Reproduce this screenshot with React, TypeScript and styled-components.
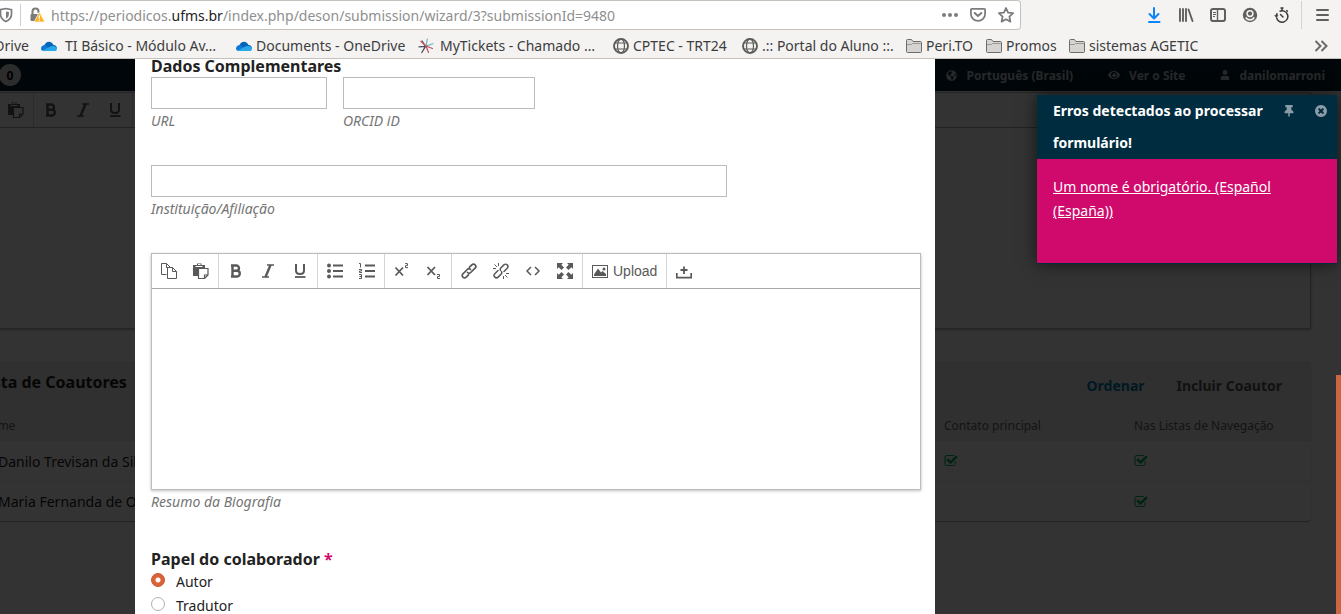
import React from 'react';
import styled, { createGlobalStyle, css } from 'styled-components';
import { FaUser, FaEye, FaGlobeAmericas, FaThumbtack } from 'react-icons/fa';

const GlobalStyle = createGlobalStyle`
  *, *::before, *::after { box-sizing: border-box; }
  body { margin: 0; background: #fff; font-family: 'Noto Sans', 'Open Sans', sans-serif; }
  button, input, textarea { font: inherit; margin: 0; }
  button { border: 0; padding: 0; background: none; color: inherit; }
  a { color: inherit; text-decoration: none; }
`;

/* ---------- icons ---------- */

type IconProps = { size?: number; box?: number; children: React.ReactNode };
const Icon = ({ size = 16, box = 16, children }: IconProps) => (
  <svg width={size} height={size} viewBox={`0 0 ${box} ${box}`} fill="none" aria-hidden="true">
    {children}
  </svg>
);

const CheckSquare = () => (
  <Icon size={14} box={1792}>
    <path fill="currentColor" d="M1472 930v318q0 119-84.5 203.5t-203.5 84.5h-832q-119 0-203.5-84.5t-84.5-203.5v-832q0-119 84.5-203.5t203.5-84.5h832q63 0 117 25 15 7 18 23 3 17-9 29l-49 49q-10 10-23 10-3 0-9-2-23-6-45-6h-832q-66 0-113 47t-47 113v832q0 66 47 113t113 47h832q66 0 113-47t47-113v-254q0-13 9-22l64-64q10-10 23-10 6 0 12 3 20 8 20 29zm231-489l-814 814q-24 24-57 24t-57-24l-430-430q-24-24-24-57t24-57l110-110q24-24 57-24t57 24l263 263 647-647q24-24 57-24t57 24l110 110q24 24 24 57t-24 57z" />
  </Icon>
);

const TimesCircle = () => (
  <Icon size={14} box={1792}>
    <path fill="currentColor" d="M1277 1122q0-26-19-45l-181-181 181-181q19-19 19-45 0-27-19-46l-90-90q-19-19-46-19-26 0-45 19l-181 181-181-181q-19-19-45-19-27 0-46 19l-90 90q-19 19-19 46 0 26 19 45l181 181-181 181q-19 19-19 45 0 27 19 46l90 90q19 19 46 19 26 0 45-19l181-181 181 181q19 19 45 19 27 0 46-19l90-90q19-19 19-46zm387-226q0 209-103 385.5t-279.5 279.5-385.5 103-385.5-103-279.5-279.5-103-385.5 103-385.5 279.5-279.5 385.5-103 385.5 103 279.5 279.5 103 385.5z" />
  </Icon>
);

const ShieldIcon = () => (
  <Icon>
    <path d="M2.5 2.6 8 1.5l5.500 1.100v4.400c0 3.600-2.200 6-5.500 7.600-3.300-1.600-5.500-4-5.500-7.600z" stroke="#7c7c7c" strokeWidth="1.700" />
    <path d="M8 4.500v7.200c1.900-1.100 2.900-2.600 2.900-4.700V5z" fill="#7c7c7c" />
  </Icon>
);
const LockIcon = () => (
  <Icon>
    <path d="M3.500 8V4.500a3 3 0 0 1 6 0V6" stroke="#7a7a7a" strokeWidth="2" />
    <rect x="1.500" y="7" width="10" height="7" rx="1" fill="#7a7a7a" />
    <path d="M10.500 5 15.800 15H5z" fill="#ffb31a" stroke="#f5f5f5" strokeWidth=".8" strokeLinejoin="round" />
    <path d="M10.400 8.500v3M10.400 12.600v1.200" stroke="#fff" strokeWidth="1.300" />
  </Icon>
);
const DotsIcon = () => (
  <Icon><g fill="#7c7c7c"><circle cx="2" cy="8" r="2" /><circle cx="8" cy="8" r="2" /><circle cx="14" cy="8" r="2" /></g></Icon>
);
const PocketIcon = () => (
  <Icon>
    <path d="M1.800 1.800h12.400a.9.9 0 0 1 .9.900V7a7.100 6.800 0 0 1-14.200 0V2.700a.9.9 0 0 1 .9-.9z" stroke="#7c7c7c" strokeWidth="1.800" />
    <path d="M4.700 6 8 9.100 11.300 6" stroke="#7c7c7c" strokeWidth="2" strokeLinecap="round" strokeLinejoin="round" />
  </Icon>
);
const StarIcon = () => (
  <Icon>
    <path d="m8 1 2.100 4.600 5 .6-3.700 3.400 1 5L8 12.200l-4.400 2.400 1-5L.9 6.200l5-.6z" stroke="#7c7c7c" strokeWidth="1.800" strokeLinejoin="round" />
  </Icon>
);
const DownloadIcon = () => (
  <Icon>
    <path d="M8 1v10M3.500 7 8 11.500 12.500 7" stroke="#0a84ff" strokeWidth="2" strokeLinecap="round" strokeLinejoin="round" />
    <path d="M3 15h10.500" stroke="#0a84ff" strokeWidth="2" strokeLinecap="round" />
  </Icon>
);
const LibraryIcon = () => (
  <Icon><path d="M2 2v12M5 2v12M8 2v12M10.500 2.500l4 11.500" stroke="#5f5f60" strokeWidth="1.900" strokeLinecap="round" /></Icon>
);
const SidebarIcon = () => (
  <Icon>
    <rect x="1" y="2" width="14" height="12" rx="2" stroke="#5f5f60" strokeWidth="2" />
    <path d="M7.500 2v12" stroke="#5f5f60" strokeWidth="1.400" />
    <path d="M3 5.500h3M3 7.500h3M3 9.500h2" stroke="#5f5f60" strokeWidth="1" />
  </Icon>
);
const AccountIcon = () => (
  <Icon>
    <circle cx="8" cy="8" r="7.200" fill="#5f5f60" />
    <circle cx="8" cy="6.600" r="2.900" stroke="#f4f3f2" strokeWidth="1.500" />
    <path d="M3.800 10.400c1 2 2.400 2.500 4.200 2.500s3.200-.5 4.200-2.500" stroke="#f4f3f2" strokeWidth="1.600" />
  </Icon>
);
const TimerIcon = () => (
  <Icon>
    <path d="M5.500 4.400a5.700 5.700 0 1 1-3 6" stroke="#3a3a3c" strokeWidth="1.500" />
    <path d="M2.200 9.200a5.700 5.700 0 0 1 1.200-3M6.500 1h3M8 1v2.500M12.300 3.200l1.500 1.400" stroke="#3a3a3c" strokeWidth="1.500" />
    <path d="M.2 8.200 2.300 10.800 4.600 8.200z" fill="#3a3a3c" />
    <path d="m6.500 7.500 2.500 2.500" stroke="#3a3a3c" strokeWidth="1.500" strokeLinecap="round" />
  </Icon>
);
const MenuIcon = () => (
  <Icon><path d="M3 3h11M3 8h11M3 13h11" stroke="#5f5f60" strokeWidth="2" strokeLinecap="round" /></Icon>
);
const CloudIcon = () => (
  <Icon>
    <path d="M3 8.500C4 4 9.500 1.500 12.500 7c2.500 0 3.500 2 3.400 3.500L8 12z" fill="#0364b8" />
    <path d="M0 10.500C0 8 2 6.800 4.500 7L12 12.800H2.500C1 12.800 0 12 0 10.500z" fill="#0f78d4" />
    <path d="M2 12.300 9.500 8.500c2.500-1 6-.5 6.500 2.200 0 1.500-1 2.300-2.500 2.300H3.500z" fill="#28a8ea" />
  </Icon>
);
const TicketIcon = () => (
  <Icon>
    <path d="M7.500 8.300 1 8.800M7.500 8.300 3.800 14.500M7.500 8.300 4 3" stroke="#474b58" strokeWidth="1.300" strokeLinecap="round" />
    <path d="M8 8 9.300 1.200M8 8l7-2.300" stroke="#6fb3bf" strokeWidth="1.200" strokeLinecap="round" />
    <path d="m8 8 6.500 2.500M8 8l2.500 6.500M8 8 3 3.500" stroke="#c4505c" strokeWidth="1.200" strokeLinecap="round" />
  </Icon>
);
const GlobeIcon = () => (
  <Icon>
    <circle cx="8" cy="8" r="7" stroke="#5c5c58" strokeWidth="1.900" />
    <ellipse cx="8" cy="8" rx="3.500" ry="7" stroke="#5c5c58" strokeWidth="1.200" />
    <path d="M2 5h12M2 11h12" stroke="#5c5c58" strokeWidth="1.200" />
  </Icon>
);
const FolderIcon = () => (
  <Icon>
    <path d="M.5 13.500v-11a1 1 0 0 1 1-1h4l1.500 2h7.500a1 1 0 0 1 1 1v9a1 1 0 0 1-1 1h-13a1 1 0 0 1-1-1z" fill="#d5d4d1" stroke="#6d6d68" />
    <path d="M1 6.500h4.500l1-1H15" stroke="#8b8b86" strokeWidth=".8" />
  </Icon>
);
const ChevronsIcon = () => (
  <Icon><path d="m2.500 3 5 5-5 5M8.500 3l5 5-5 5" stroke="#6a6a6a" strokeWidth="2" /></Icon>
);

/* editor toolbar icons */
const CopyIcon = () => (
  <Icon>
    <path d="M5.500 11.500h-5V.5h5l4 4M5.500.5v4h6l4 4v7h-9v-11M11.500 4.500v4h4M9.500 4.500h-4" stroke="#595959" />
  </Icon>
);
const PasteIcon = () => (
  <Icon>
    <path d="M0 2h4V.5h4.500V2H12v3H6v8H0z" fill="#595959" />
    <path d="M2.500 3.500h7M5 1.500h2.500" stroke="#fff" />
    <path d="M5.500 5.500h9.500v6.500l-3.500 3.500h-6zM15 12h-3.500v3.500" stroke="#595959" fill="#fff" strokeWidth="1.200" />
  </Icon>
);
const BoldIcon = () => (
  <Icon><path d="M4.500 2.500V13.500h4.200a2.800 2.800 0 0 0 .4-5.700H5h3.300a2.600 2.600 0 0 0 0-5.300H4.500M3 2.500h2M3 13.500h2" stroke="#595959" strokeWidth="2.400" /></Icon>
);
const ItalicIcon = () => (
  <Icon><path d="M7 2h7M2 14h7" stroke="#595959" strokeWidth="1.400" /><path d="M10.500 2 5.500 14" stroke="#595959" strokeWidth="2.400" /></Icon>
);
const UnderlineIcon = () => (
  <Icon><path d="M4 1v6.500c0 2.200 1.500 3.500 4 3.500s4-1.300 4-3.500V1" stroke="#595959" strokeWidth="2" /><path d="M3 14h10.500" stroke="#595959" strokeWidth="1.800" /></Icon>
);
const BulletIcon = () => (
  <Icon>
    <g fill="#595959"><circle cx="2" cy="2.500" r="2" /><circle cx="2" cy="8" r="2" /><circle cx="2" cy="13.500" r="2" /></g>
    <path d="M6 2.500h10M6 8h10M6 13.500h10" stroke="#595959" strokeWidth="1.800" />
  </Icon>
);
const NumberIcon = () => (
  <Icon>
    <path d="M6 2.500h10M6 8h10M6 13.500h10" stroke="#595959" strokeWidth="1.800" />
    <path d="M0 .5h1.500v4M0 6.500h2.500v1.500H.5v1.500H3M0 11.500h2.500v4H0M.5 13.500h2" stroke="#595959" />
  </Icon>
);
const SuperIcon = () => (
  <Icon><path d="m1.500 4.500 7.500 8M9 4.500l-7.500 8" stroke="#595959" strokeWidth="1.800" /><path d="M11 .6h2.500v2h-2v2H14" stroke="#595959" /></Icon>
);
const SubIcon = () => (
  <Icon><path d="m1.500 4 7.500 8M9 4l-7.500 8" stroke="#595959" strokeWidth="1.800" /><path d="M11 11.500h2.500v2h-2v2H14" stroke="#595959" /></Icon>
);
const LinkIcon = () => (
  <Icon>
    <path d="M6.500 9.500a2.300 2.300 0 0 0 3.200 0l4.400-4.300a2.300 2.300 0 0 0-3.300-3.300L8.500 4.200M9.500 6.500a2.300 2.300 0 0 0-3.200 0l-4.400 4.300a2.300 2.300 0 0 0 3.300 3.300l2.300-2.300" stroke="#595959" strokeWidth="1.700" strokeLinecap="round" />
  </Icon>
);
const UnlinkIcon = () => (
  <Icon>
    <path d="M11 8.500 14.200 5.200a2.300 2.300 0 0 0-3.300-3.300L7.500 5.300a2 2 0 0 0 0 2M5 7.500l-3.200 3.300a2.300 2.300 0 0 0 3.300 3.300l3.400-3.400a2 2 0 0 0 0-2" stroke="#595959" strokeWidth="1.500" strokeLinecap="round" />
    <path d="M5.500 0v3M1.500 1.500 4 4M0 5.500h3M10.500 13v3M12 12l2.500 2.500M13 10.500h3" stroke="#595959" />
  </Icon>
);
const CodeIcon = () => (
  <Icon><path d="M6 4 2 8l4 4M10 4l4 4-4 4" stroke="#595959" strokeWidth="1.500" /></Icon>
);
const FullscreenIcon = () => (
  <Icon>
    <path d="M0 0h6L4.300 1.700 7 4.500 4.500 7 1.700 4.300 0 6zM16 0v6l-1.700-1.700L11.500 7 9 4.500l2.700-2.800L10 0zM0 16v-6l1.700 1.700L4.500 9 7 11.500l-2.700 2.800L6 16zM16 16h-6l1.700-1.700L9 11.500 11.500 9l2.800 2.700L16 10z" fill="#595959" />
  </Icon>
);
const ImageIcon = () => (
  <Icon>
    <rect x=".5" y="2.500" width="15" height="12" stroke="#595959" />
    <path d="M2 13v-1.500L6 5.500l3 4 1.500-1.500L14 11v2z" fill="#595959" /><circle cx="12" cy="6" r="1.500" fill="#595959" />
  </Icon>
);
const UploadIcon = () => (
  <Icon>
    <path d="M.8 10v4.700h14.400V10" stroke="#595959" strokeWidth="1.700" />
    <path d="M8 3.500V11M4.500 7h7" stroke="#595959" strokeWidth="1.800" />
  </Icon>
);

/* ---------- browser chrome ---------- */

const Screen = styled.div`
  display: flex;
  flex-direction: column;
  height: 100vh;
  overflow: hidden;
`;
const Chrome = styled.header`
  flex: none;
  background: #f4f3f2;
  border-bottom: 1px solid #c5c1bd;
  color: #3d3d3d;
  font-size: 14px;
`;
const AddressRow = styled.div`
  display: flex;
  height: 30px;
`;
const AddressBar = styled.div`
  flex: 1;
  display: flex;
  align-items: center;
  background: #fff;
  border: 1px solid #c5c1bd;
  border-left: 0;
  border-radius: 0 4px 4px 0;
`;
const IconButton = styled.button`
  display: grid;
  place-items: center;
  width: 28px;
  height: 28px;
`;
const SiteInfo = styled.div`
  display: flex;
  align-items: center;
  gap: 8px;
  height: 22px;
  margin-left: -2px;
`;
const SiteInfoRule = styled.span`
  width: 1px;
  height: 22px;
  margin-left: -2px;
  background: #cfcfcf;
`;
const Url = styled.span`
  flex: 1;
  padding-left: 6px;
  color: #8f8f8f;
  white-space: nowrap;
  b { color: #222; font-weight: 400; }
`;
const BrowserTools = styled.div`
  display: flex;
  align-items: center;
  padding-left: 117px;
`;
const ToolButton = styled(IconButton)`
  width: 32px;
`;
const MenuSlot = styled.div`
  display: flex;
  margin-left: 3px;
  padding: 0 3px 0 4px;
  border-left: 1px solid #d5d3d1;
`;
const Bookmarks = styled.nav`
  display: flex;
  align-items: center;
  height: 28px;
  padding-top: 3px;
`;
const Bookmark = styled.a<{ $width: number; $gap?: number; $clip?: boolean }>`
  flex: none;
  display: flex;
  align-items: center;
  gap: ${(p) => p.$gap ?? 4}px;
  width: ${(p) => p.$width}px;
  line-height: 24px;
  white-space: nowrap;
  svg { flex: none; }
  ${(p) => p.$clip && css`
    justify-content: flex-end;
    overflow: hidden;
    padding-right: 12px;
  `}
`;
const Overflow = styled.button`
  margin-left: auto;
  padding-right: 12px;
  display: flex;
`;

/* ---------- page behind the dialog ---------- */

const Viewport = styled.div`
  position: relative;
  flex: 1;
  overflow: hidden;
`;
const NavBar = styled.nav`
  display: flex;
  align-items: center;
  height: 32px;
  padding: 0 16px 0 0;
  background: #00202f;
  color: rgba(255, 255, 255, 0.75);
  font-size: 12px;
  font-weight: 700;
`;
const TaskCount = styled.button`
  width: 22px;
  height: 22px;
  margin-left: -1px;
  margin-right: auto;
  border-radius: 11px;
  background: #ddd;
  color: #000;
`;
const NavLink = styled.a`
  display: flex;
  align-items: center;
  gap: 9px;
  margin-left: 35px;
`;
const Content = styled.main`
  margin: 1px 30px 0 -34px;
`;
const EditorFrame = styled.div<{ $body: number }>`
  border: 1px solid #bbb;
  box-shadow: 0 1px 3px rgba(0, 0, 0, 0.25);
  textarea {
    display: block;
    width: 100%;
    height: ${(p) => p.$body}px;
    border: 0;
    padding: 8px;
    resize: none;
    background: #fff;
    outline: 0;
  }
`;
const ToolbarRow = styled.div`
  display: flex;
  height: 35px;
  border-bottom: 1px solid #aaa;
  background: #fff;
`;
const ToolGroup = styled.div`
  display: flex;
  padding: 0 1px;
  border-right: 1px solid #d5d5d5;
  &:last-child { border-right: 0; }
`;
const EditorButton = styled.button`
  display: flex;
  align-items: center;
  justify-content: center;
  gap: 5px;
  min-width: 32px;
  padding: 0 8px;
  color: #595959;
  font: 14px 'Liberation Sans', Arial, sans-serif;
`;
const Panel = styled.section`
  margin-top: 32px;
  border-radius: 4px;
  background: #fff;
  box-shadow: 0 1px 1px rgba(0, 0, 0, 0.35);
`;
const PanelHead = styled.div`
  display: flex;
  justify-content: space-between;
  height: 48px;
  padding: 0 29px 0 13px;
  background: #f0f0f0;
  line-height: 42px;
  h2 { margin: 0; font-size: 16px; color: #222; }
`;
const PanelActions = styled.div`
  display: flex;
  gap: 32px;
  line-height: 50px;
  font-size: 14px;
  font-weight: 700;
`;
const PanelAction = styled.button<{ $primary?: boolean }>`
  color: ${(p) => (p.$primary ? '#007ab2' : '#555')};
`;
const Table = styled.table`
  width: 100%;
  table-layout: fixed;
  border-collapse: separate;
  border-spacing: 0;
  text-align: left;
  th {
    height: 32px;
    padding: 0 0 0 15px;
    background: #f0f0f0;
    color: #666;
    font-size: 12px;
    font-weight: 400;
  }
  td {
    height: 40px;
    padding: 0 0 0 32px;
    color: #222;
    font-size: 14px;
  }
  tr + tr td { border-top: 1px solid #eee; }
  th + th, td + td { padding: 0; }
  td + td { color: #00b24e; }
  svg { display: block; }
`;
const ContactCol = styled.col` width: 190px; `;
const BrowseCol = styled.col` width: 177px; `;

/* ---------- dialog ---------- */

const Backdrop = styled.div`
  position: absolute;
  inset: 0;
  display: flex;
  justify-content: center;
  padding-right: 271px;
  background: rgba(0, 0, 0, 0.8);
`;
const Dialog = styled.form`
  width: 800px;
  height: max-content;
  min-height: 100%;
  margin-top: -6px;
  padding: 0 14px 0 16px;
  background: #fff;
  color: #222;
  font-size: 14px;
  line-height: 24px;
`;
const Section = styled.fieldset`
  min-width: 0;
  margin: 0 0 32px;
  padding: 0;
  border: 0;
  legend { height: 24px; padding: 0; font-size: 16px; line-height: 26px; font-weight: 700; }
`;
const FieldRow = styled.div`
  display: flex;
  gap: 16px;
`;
const Field = styled.div<{ $width?: number }>`
  width: ${(p) => (p.$width ? `${p.$width}px` : '100%')};
  > label {
    display: block;
    font-style: italic;
    color: #757575;
  }
  > input {
    display: block;
    width: 100%;
    height: 32px;
    padding: 0 8px;
    border: 1px solid #bbb;
    border-radius: 0;
    background: #fff;
  }
`;
const Required = styled.span` color: #d00a6c; `;
const Choice = styled.label`
  display: flex;
  gap: 11px;
`;
const Radio = styled.input`
  appearance: none;
  width: 14px;
  height: 14px;
  margin: 3px 0 0;
  border: 1px solid #b5b0ac;
  border-radius: 50%;
  background: #fff;
  &:checked {
    border-color: #c9542c;
    background: radial-gradient(circle, #fff 0 2px, #dd6238 3px);
  }
`;

/* ---------- notification and scroll thumb ---------- */

const Toast = styled.aside`
  position: absolute;
  top: 36px;
  right: 4px;
  width: 300px;
  border-bottom: 1px solid #002c40;
  box-shadow: 0 0 16px rgba(0, 0, 0, 0.6);
  color: #fff;
  font-size: 14px;
`;
const ToastHead = styled.div`
  display: flex;
  align-items: flex-start;
  padding: 0 9px 0 16px;
  background: #002c40;
  line-height: 32px;
  strong { flex: 1; }
`;
const ToastButton = styled.button`
  display: grid;
  place-items: center;
  width: 14px;
  height: 32px;
  margin-left: 18px;
  color: #8a9ca8;
`;
const ToastBody = styled.div`
  min-height: 104px;
  padding: 16px 48px 16px 16px;
  background: #d00a6c;
  line-height: 24px;
  a { text-decoration: underline; }
`;
const ScrollThumb = styled.div`
  position: absolute;
  right: 0;
  bottom: 0;
  width: 5px;
  height: 239px;
  background: #cc6640;
`;

type Tool = { name: string; icon: React.ReactNode; text?: string };
const groups: Tool[][] = [
  [{ name: 'Copiar', icon: <CopyIcon /> }, { name: 'Colar', icon: <PasteIcon /> }],
  [
    { name: 'Negrito', icon: <BoldIcon /> },
    { name: 'Itálico', icon: <ItalicIcon /> },
    { name: 'Sublinhado', icon: <UnderlineIcon /> },
  ],
  [{ name: 'Lista', icon: <BulletIcon /> }, { name: 'Lista numerada', icon: <NumberIcon /> }],
  [{ name: 'Sobrescrito', icon: <SuperIcon /> }, { name: 'Subscrito', icon: <SubIcon /> }],
  [
    { name: 'Inserir link', icon: <LinkIcon /> },
    { name: 'Remover link', icon: <UnlinkIcon /> },
    { name: 'Código', icon: <CodeIcon /> },
    { name: 'Tela cheia', icon: <FullscreenIcon /> },
  ],
  [{ name: 'Upload', icon: <ImageIcon />, text: 'Upload' }],
  [{ name: 'Enviar arquivo', icon: <UploadIcon /> }],
];

const Editor = ({ id, label, tools, body }: { id: string; label?: string; tools: Tool[][]; body: number }) => (
  <EditorFrame $body={body}>
    <ToolbarRow role="toolbar">
      {tools.map((group, i) => (
        <ToolGroup key={i}>
          {group.map((t) => (
            <EditorButton key={t.name} type="button" aria-label={t.name}>
              {t.icon}
              {t.text}
            </EditorButton>
          ))}
        </ToolGroup>
      ))}
    </ToolbarRow>
    <textarea id={id} aria-label={label} />
  </EditorFrame>
);

const authors = [
  { name: 'Danilo Trevisan da Silva', contact: true, browse: true },
  { name: 'Maria Fernanda de O', contact: false, browse: true },
];

export default function App() {
  return (
    <Screen>
      <GlobalStyle />
      <Chrome>
        <AddressRow>
          <AddressBar>
            <SiteInfo>
              <ShieldIcon />
              <SiteInfoRule />
              <LockIcon />
            </SiteInfo>
            <Url>https://periodicos.<b>ufms.br</b>/index.php/deson/submission/wizard/3?submissionId=9480</Url>
            <IconButton aria-label="Ações"><DotsIcon /></IconButton>
            <IconButton aria-label="Pocket"><PocketIcon /></IconButton>
            <IconButton aria-label="Favoritar"><StarIcon /></IconButton>
          </AddressBar>
          <BrowserTools>
            <ToolButton aria-label="Downloads"><DownloadIcon /></ToolButton>
            <ToolButton aria-label="Biblioteca"><LibraryIcon /></ToolButton>
            <ToolButton aria-label="Painel lateral"><SidebarIcon /></ToolButton>
            <ToolButton aria-label="Conta"><AccountIcon /></ToolButton>
            <ToolButton aria-label="Cronômetro"><TimerIcon /></ToolButton>
            <MenuSlot><ToolButton aria-label="Menu"><MenuIcon /></ToolButton></MenuSlot>
          </BrowserTools>
        </AddressRow>
        <Bookmarks>
          <Bookmark href="#" $width={41} $clip>OneDrive</Bookmark>
          <Bookmark href="#" $width={195} $gap={8}><CloudIcon />TI Básico - Módulo Av…</Bookmark>
          <Bookmark href="#" $width={182}><CloudIcon />Documents - OneDrive</Bookmark>
          <Bookmark href="#" $width={195} $gap={6}><TicketIcon />MyTickets - Chamado …</Bookmark>
          <Bookmark href="#" $width={129}><GlobeIcon />CPTEC - TRT24</Bookmark>
          <Bookmark href="#" $width={164}><GlobeIcon />.:: Portal do Aluno ::.</Bookmark>
          <Bookmark href="#" $width={80}><FolderIcon />Peri.TO</Bookmark>
          <Bookmark href="#" $width={83}><FolderIcon />Promos</Bookmark>
          <Bookmark href="#" $width={140}><FolderIcon />sistemas AGETIC</Bookmark>
          <Overflow aria-label="Mais favoritos"><ChevronsIcon /></Overflow>
        </Bookmarks>
      </Chrome>

      <Viewport>
        <NavBar>
          <TaskCount>0</TaskCount>
          <NavLink href="#"><FaGlobeAmericas size={11} />Português (Brasil)</NavLink>
          <NavLink href="#"><FaEye size={12} />Ver o Site</NavLink>
          <NavLink href="#"><FaUser size={10} />danilomarroni</NavLink>
        </NavBar>
        <Content>
          <Editor id="comments" label="Comentários" tools={groups.slice(0, 2).concat([[]])} body={200} />
          <Panel>
            <PanelHead>
              <h2>Lista de Coautores</h2>
              <PanelActions>
                <PanelAction $primary>Ordenar</PanelAction>
                <PanelAction>Incluir Coautor</PanelAction>
              </PanelActions>
            </PanelHead>
            <Table>
              <colgroup><col /><ContactCol /><BrowseCol /></colgroup>
              <thead>
                <tr><th>Nome</th><th>Contato principal</th><th>Nas Listas de Navegação</th></tr>
              </thead>
              <tbody>
                {authors.map((a) => (
                  <tr key={a.name}>
                    <td>{a.name}</td>
                    <td>{a.contact && <CheckSquare />}</td>
                    <td>{a.browse && <CheckSquare />}</td>
                  </tr>
                ))}
              </tbody>
            </Table>
          </Panel>
        </Content>

        <Backdrop>
          <Dialog>
            <Section>
              <legend>Dados Complementares</legend>
              <FieldRow>
                <Field $width={176}><input id="url" /><label htmlFor="url">URL</label></Field>
                <Field $width={192}><input id="orcid" /><label htmlFor="orcid">ORCID iD</label></Field>
              </FieldRow>
            </Section>
            <Section>
              <Field $width={576}>
                <input id="affiliation" />
                <label htmlFor="affiliation">Instituição/Afiliação</label>
              </Field>
            </Section>
            <Section>
              <Field>
                <Editor id="bio" tools={groups} body={200} />
                <label htmlFor="bio">Resumo da Biografia</label>
              </Field>
            </Section>
            <Section>
              <legend>Papel do colaborador <Required>*</Required></legend>
              <Choice><Radio type="radio" name="role" defaultChecked />Autor</Choice>
              <Choice><Radio type="radio" name="role" />Tradutor</Choice>
            </Section>
          </Dialog>
        </Backdrop>

        <Toast role="alert">
          <ToastHead>
            <strong>Erros detectados ao processar formulário!</strong>
            <ToastButton aria-label="Fixar"><FaThumbtack size={12} /></ToastButton>
            <ToastButton aria-label="Fechar"><TimesCircle /></ToastButton>
          </ToastHead>
          <ToastBody><a href="#">Um nome é obrigatório. (Español (España))</a></ToastBody>
        </Toast>
        <ScrollThumb />
      </Viewport>
    </Screen>
  );
}
